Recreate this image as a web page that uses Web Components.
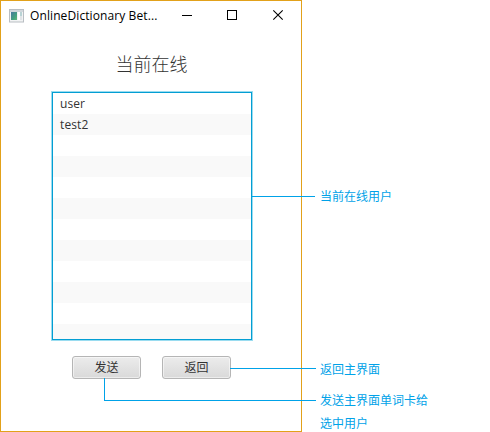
<!DOCTYPE html>
<html lang="zh-CN">
<head>
<meta charset="utf-8">
<title>OnlineDictionary</title>
<style>
html, body { margin: 0; background: #fff; }
body { width: 490px; height: 432px; overflow: hidden; font-family: "Open Sans", "Noto Sans CJK SC", sans-serif; font-size: 12px; color: #333; }
</style>
</head>
<body>
<annotated-view>
  <app-window caption="OnlineDictionary Bet...">
    <page-heading>当前在线</page-heading>
    <user-list>
      <user-row>user</user-row>
      <user-row>test2</user-row>
    </user-list>
    <button-bar>
      <push-button>发送</push-button>
      <push-button>返回</push-button>
    </button-bar>
  </app-window>
  <note-text slot="notes" style="--gap:185px">当前在线用户</note-text>
  <note-text slot="notes" style="--gap:150px">返回主界面</note-text>
  <note-text slot="notes" style="--gap:8px">发送主界面单词卡给<br>选中用户</note-text>
</annotated-view>
<script>
const define = (name, html, setup) => customElements.define(name, class extends HTMLElement {
  constructor() {
    super();
    this.attachShadow({ mode: 'open' }).innerHTML = html;
  }
  connectedCallback() { if (setup) setup(this, this.shadowRoot); }
});

define('annotated-view', `
<style>
:host { display: flex; position: relative; width: 490px; height: 432px; }
.notes { display: flex; flex-direction: column; padding-left: 18px; }
svg { position: absolute; left: 0; top: 0; pointer-events: none; }
</style>
<slot></slot>
<div class="notes"><slot name="notes"></slot></div>
<svg width="490" height="432" fill="none" stroke="#00a2e8" shape-rendering="crispEdges">
  <path d="M252 196.5H315M230 368.5H316M104.5 378V400.5H316"/>
</svg>`);

define('app-window', `
<style>
:host { display: flex; flex-direction: column; box-sizing: border-box; width: 302px; height: 432px; border: 1px solid #e2a11a; background: #fff; }
main { display: flex; flex-direction: column; align-items: center; padding-top: 19px; }
</style>
<title-bar></title-bar>
<main><slot></slot></main>`, (host, root) => {
  root.querySelector('title-bar').textContent = host.getAttribute('caption');
});

define('title-bar', `
<style>
:host { display: flex; align-items: center; height: 29px; padding-left: 8px; color: #000; font-size: 12px; }
.icon { flex: none; margin-right: 6px; }
.text { width: 134px; white-space: nowrap; letter-spacing: .1px; }
.controls { display: flex; }
.controls svg { display: block; }
</style>
<svg class="icon" width="15" height="14" viewBox="0 0 15 14">
  <defs><linearGradient id="g" x2="1" y2="1"><stop stop-color="#4a78a0"/><stop offset=".6" stop-color="#45a080"/><stop offset="1" stop-color="#62b878"/></linearGradient></defs>
  <rect x=".5" y=".5" width="14" height="12.5" fill="#f2f3f4" stroke="#b9bec3"/>
  <rect x="1" y="1" width="13" height="2" fill="#d2d7dc"/>
  <rect x="2" y="3" width="6" height="8" fill="url(#g)"/>
  <rect x="9" y="3" width="2" height="8" fill="#fff"/>
  <rect x="11" y="3" width="2" height="4" fill="#b9d3d5"/>
  <rect x="11" y="7" width="2" height="4" fill="#e0e4e7"/>
</svg>
<span class="text"><slot></slot></span>
<div class="controls">
  <svg width="46" height="29" stroke="#000" fill="none" shape-rendering="crispEdges"><path d="M18 14.5h10"/></svg>
  <svg width="46" height="29" stroke="#000" fill="none" shape-rendering="crispEdges"><rect x="17.5" y="9.5" width="9" height="9"/></svg>
  <svg width="45" height="29" stroke="#000" fill="none"><path d="M17.3 9.3l9.4 9.4M26.7 9.3l-9.4 9.4" stroke-width="1.1"/></svg>
</div>`);

define('page-heading', `
<style>:host { display: block; height: 30px; line-height: 30px; font-size: 18px; font-weight: 300; padding-left: 1px; }</style>
<slot></slot>`);

define('user-list', `
<style>
:host { display: block; box-sizing: border-box; width: 200px; height: 248px; margin-top: 13px; margin-left: 2px; border: 1px solid #039ed3; box-shadow: 0 0 0 1px #9adcf0; overflow: hidden; background: repeating-linear-gradient(#fff 0 21px, #f9f9f9 21px 42px); }
</style>
<slot></slot>`);

define('user-row', `
<style>:host { display: block; height: 21px; line-height: 21px; padding-left: 7px; font-size: 12px; letter-spacing: .1px; }</style>
<slot></slot>`);

define('button-bar', `
<style>:host { display: flex; gap: 21px; margin-top: 16px; margin-left: 1px; }</style>
<slot></slot>`);

define('push-button', `
<style>
:host { display: flex; align-items: center; justify-content: center; box-sizing: border-box; width: 69px; height: 23px; border: 1px solid #b5b5b5; border-radius: 3px; background: linear-gradient(#ececec, #d9d9d9); box-shadow: inset 0 0 0 1px rgba(255,255,255,.5); line-height: 20px; }
</style>
<slot></slot>`);

define('note-text', `
<style>:host { display: block; margin-top: var(--gap, 0); line-height: 23px; font-size: 12px; color: #00a2e8; white-space: nowrap; }</style>
<slot></slot>`);
</script>
</body>
</html>
